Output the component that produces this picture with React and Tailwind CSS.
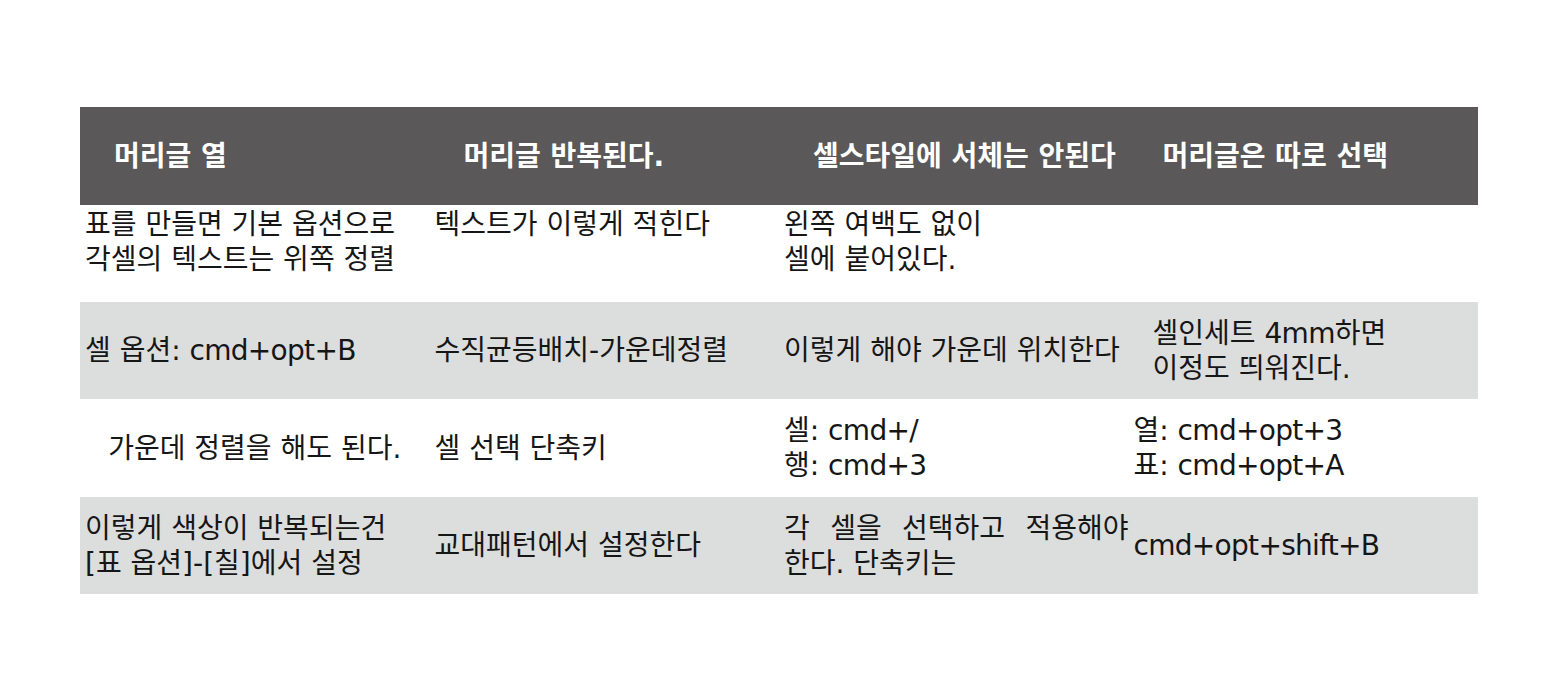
const font = { fontFamily: '"DejaVu Sans", "Noto Sans CJK KR", sans-serif' };

const headers = ['머리글 열', '머리글 반복된다.', '셀스타일에 서체는 안된다', '머리글은 따로 선택'];

// latin runs are slightly too wide in DejaVu, tighten them a bit
function Txt({ children }) {
  const parts = children.split(/([A-Za-z0-9+/]+)/);
  return parts.map((p, i) =>
    i % 2 === 1 ? <span key={i} className="tracking-[-0.7px]">{p}</span> : p
  );
}

function Cell({ lines, className = '' }) {
  return (
    <div className={`flex flex-col pl-[5px] ${className}`}>
      {lines.map((l, i) => (
        <span key={i} className="block whitespace-nowrap"><Txt>{l}</Txt></span>
      ))}
    </div>
  );
}

export default function App() {
  return (
    <div className="w-[1558px] h-[698px] bg-white pt-[107px] pl-[80px]" style={font}>
      <div className="w-[1398px] text-[28px] leading-[35px] text-[#161616]">
        <div className="grid grid-cols-4 h-[98px] bg-[#5a5859] text-white font-bold">
          {headers.map((h) => (
            <div key={h} className="flex items-center pl-[34px] whitespace-nowrap">{h}</div>
          ))}
        </div>

        <div className="grid grid-cols-4 h-[97px] bg-white">
          <Cell className="pt-[2px]" lines={['표를 만들면 기본 옵션으로', '각셀의 텍스트는 위쪽 정렬']} />
          <Cell className="pt-[2px]" lines={['텍스트가 이렇게 적힌다']} />
          <Cell className="pt-[2px]" lines={['왼쪽 여백도 없이', '셀에 붙어있다.']} />
          <Cell className="pt-[2px]" lines={[]} />
        </div>

        <div className="grid grid-cols-4 h-[97px] bg-[#dcdddd]">
          <Cell className="justify-center" lines={['셀 옵션: cmd+opt+B']} />
          <Cell className="justify-center" lines={['수직균등배치-가운데정렬']} />
          <Cell className="justify-center" lines={['이렇게 해야 가운데 위치한다']} />
          <Cell className="justify-center !pl-[24px]" lines={['셀인세트 4mm하면', '이정도 띄워진다.']} />
        </div>

        <div className="grid grid-cols-4 h-[98px] bg-white">
          <div className="flex items-center justify-center whitespace-nowrap">가운데 정렬을 해도 된다.</div>
          <Cell className="justify-center" lines={['셀 선택 단축키']} />
          <Cell className="justify-center" lines={['셀: cmd+/', '행: cmd+3']} />
          <Cell className="justify-center" lines={['열: cmd+opt+3', '표: cmd+opt+A']} />
        </div>

        <div className="grid grid-cols-4 h-[97px] bg-[#dcdddd]">
          <Cell className="justify-center" lines={['이렇게 색상이 반복되는건', '[표 옵션]-[칠]에서 설정']} />
          <Cell className="justify-center" lines={['교대패턴에서 설정한다']} />
          <div className="flex flex-col justify-center pl-[5px]">
            <span className="block whitespace-nowrap text-justify [text-align-last:justify]">각 셀을 선택하고 적용해야</span>
            <span className="block whitespace-nowrap">한다. 단축키는</span>
          </div>
          <Cell className="justify-center" lines={['cmd+opt+shift+B']} />
        </div>
      </div>
    </div>
  );
}
